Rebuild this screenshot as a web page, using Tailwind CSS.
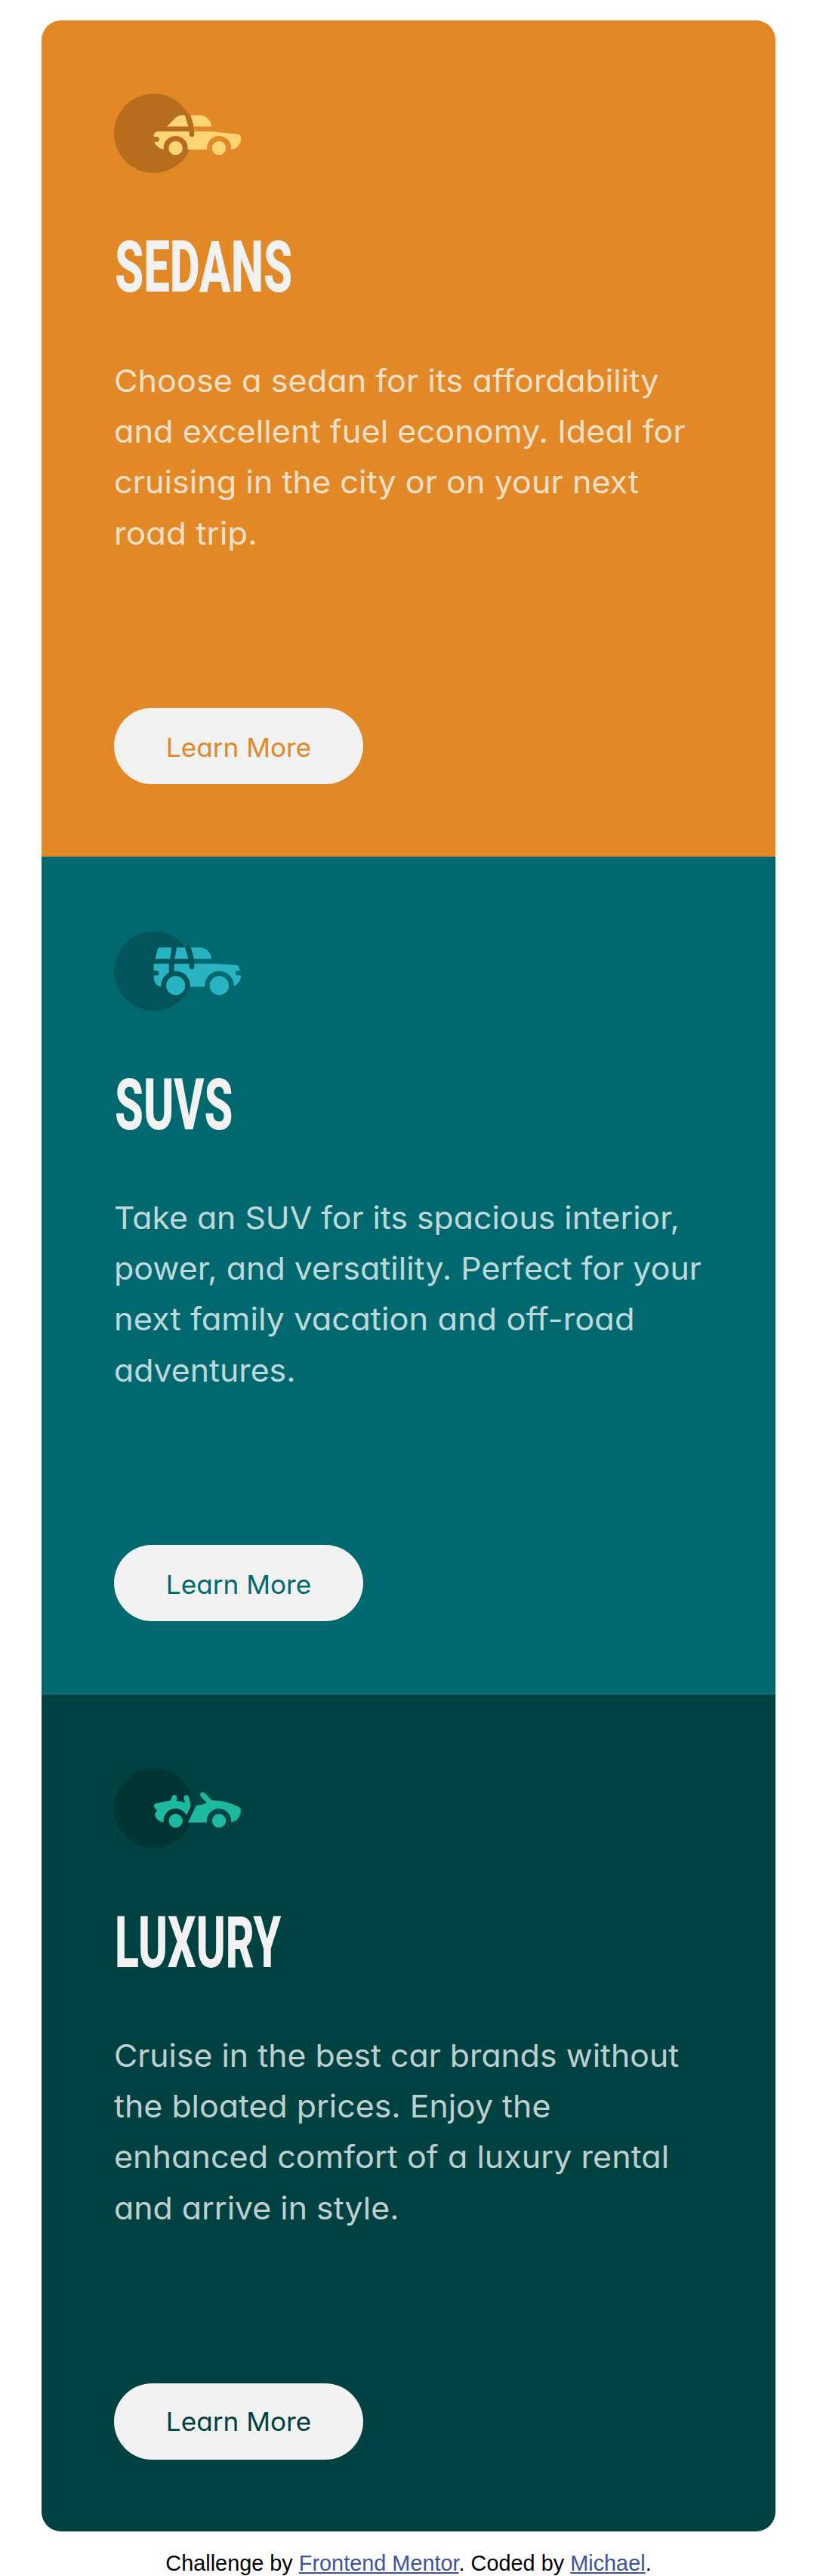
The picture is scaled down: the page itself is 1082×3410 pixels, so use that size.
<!DOCTYPE html>
<html lang="en"><head><meta charset="utf-8"><title>3-column preview card</title>
<script src="https://cdn.jsdelivr.net/npm/@tailwindcss/browser@4"></script></head>
<body class="bg-white font-['Inter',sans-serif] [font-feature-settings:'cv11']">
<main class="mx-auto mt-[27px] w-[972px] text-[#f2f2f2]">
<section class="h-[1107px] rounded-t-[26px] bg-[#e28826] px-24 pt-[97px]">
<svg class="block h-[105px] w-[168px]" viewBox="0 0 64 40" fill="#ffd473"><circle cx="20" cy="20" r="20" fill="#b66d1e"/><path d="M26.7 16.6 31.2 12Q32.5 10.9 34 10.9H35.8L37.5 16.6ZM38.6 10.9H43.5C46.3 10.9 48.5 13 49.3 16.6H40.2C39.9 14.5 39.4 12.8 38.6 10.9Z"/><path fill="none" stroke="#b66d1e" stroke-width="2.4" stroke-linecap="round" d="M37.2 11.1C38.7 14.8 39.25 17.5 39.25 20.5"/><path d="M22.1 19.05H38V20.6a1.25 1.25 0 0 0 2.5 0V19.05H49.2L62.3 20.5Q64 20.7 64 22.3V22.9C64 25.6 62 27.9 59.1 28.2V27.4a6.1 6.1 0 0 0-12.2 0V28.2H37.2V27.4A6.1 6.1 0 0 0 25 27.4V28.2C22.8 27.6 21 26.3 20.4 24.3H21.5a1.3 1.3 0 0 0 0-2.6H20.06V21.1A2.05 2.05 0 0 1 22.1 19.05Z"/><circle cx="31.1" cy="27.4" r="3.5"/><circle cx="52.95" cy="27.4" r="3.5"/></svg>
<h2 class="mt-[78px] ml-px font-['Roboto',sans-serif] text-[94px] leading-none font-extrabold"><span class="inline-block origin-left scale-x-[.655]">SEDANS</span></h2>
<p class="mt-[70px] text-[41px] leading-[67.2px] whitespace-nowrap text-white/75"><span class="block origin-left scale-x-[1.054]">Choose a sedan for its affordability</span><span class="block origin-left scale-x-[1.056]">and excellent fuel economy. Ideal for</span><span class="block origin-left scale-x-[1.053]">cruising in the city or on your next</span><span class="block origin-left scale-x-[1.07]">road trip.</span></p>
<a class="mt-[197px] flex h-[101px] w-[330px] items-center justify-center rounded-full bg-[#f2f2f2] pt-[5px] text-[34px] text-[#e28826]"><span class="scale-x-[1.035]">Learn More</span></a>
</section>
<section class="h-[1109px] border-b border-[#33787b] bg-[#006970] px-24 pt-[99px]">
<svg class="block h-[105px] w-[168px]" viewBox="0 0 64 40" fill="#28b4c3"><circle cx="20" cy="20" r="20" fill="#00545a"/><path d="M20.8 13.8 22 9Q22.3 8.1 23.2 8.1H29.1L28.2 13.8ZM31.6 8.1H35.9L37.5 13.8H30.6ZM38.7 8.1H43.2C46.3 8.1 48.7 10.3 49.3 13.8H40.25C39.9 11.7 39.5 10 38.7 8.1Z"/><path fill="none" stroke="#00545a" stroke-width="2.4" stroke-linecap="round" d="M37.2 8.3C38.7 12 39.25 14.7 39.25 17.7"/><path d="M20.06 16.25H27.7V20.8C25.1 22.2 23.8 24.6 23.7 27.9C21.5 27.5 20.06 25.6 20.06 23.2V22.2H21.4a1.2 1.2 0 0 0 0-2.4H20.06ZM30.35 16.25H38V17.8a1.25 1.25 0 0 0 2.5 0V16.25H50.4L61.5 16.85Q62.6 16.9 63 17.8L63.6 19.8H62.5a1.2 1.2 0 0 0 0 2.4H64C64 24.6 62.7 26.7 60.4 27.6V27.3A7.3 7.3 0 0 0 45.8 27.3V27.9H38.4V27.3A7.3 7.3 0 0 0 30.35 20Z"/><circle cx="31.1" cy="27.3" r="4.8"/><circle cx="53.1" cy="27.3" r="4.8"/></svg>
<h2 class="mt-[78px] ml-px font-['Roboto',sans-serif] text-[94px] leading-none font-extrabold"><span class="inline-block origin-left scale-x-[.65]">SUVS</span></h2>
<p class="mt-[69px] text-[41px] leading-[67.2px] whitespace-nowrap text-white/75"><span class="block origin-left scale-x-[1.043]">Take an SUV for its spacious interior,</span><span class="block origin-left scale-x-[1.048]">power, and versatility. Perfect for your</span><span class="block origin-left scale-x-[1.059]">next family vacation and off-road</span><span class="block origin-left scale-x-[1.043]">adventures.</span></p>
<a class="mt-[197px] flex h-[101px] w-[330px] items-center justify-center rounded-full bg-[#f2f2f2] pt-[5px] text-[34px] text-[#006970]"><span class="scale-x-[1.035]">Learn More</span></a>
</section>
<section class="h-[1108px] rounded-b-[26px] bg-[#004241] px-24 pt-[98px]">
<svg class="block h-[105px] w-[168px]" viewBox="0 0 64 40" fill="#1cb9a0"><circle cx="20" cy="20" r="20" fill="#003534"/><path d="M21.2 17.65 28.6 16.1 29.2 14.3C29.5 13.4 30.4 13.2 31 13.5C31.7 13.8 31.9 14.6 31.7 15.3L31.5 16.4Q33.8 16.5 35.9 17.3L35.2 15.1C35 14.1 35.6 13.4 36.4 13.4C37.1 13.3 37.6 13.8 37.8 14.6L38.5 17.2Q38.9 18.6 38.3 19.9L36.6 23.7A6.1 6.1 0 0 0 25 26.4V27.2C22.6 26.8 20.7 25 20.6 23.2C20.6 22.5 21 22.2 21.7 21.4C21.4 20.6 20.06 19.9 20.06 18.9Q20.1 17.9 21.2 17.65ZM37.3 27.2 41.5 18.7Q44.5 18.5 46.8 17.3L43.9 14.3C43 13.3 43.6 11.9 44.7 11.9Q45.3 11.9 45.9 12.5L49.4 16.1Q56.5 16 63.2 19.5Q64 20 64 20.8C64 24.2 62 26.9 59.05 27.2V26.4a6.1 6.1 0 0 0-12.2 0V27.2Z"/><circle cx="31.1" cy="26.4" r="3.5"/><circle cx="52.95" cy="26.4" r="3.5"/></svg>
<h2 class="mt-[79px] ml-px font-['Roboto',sans-serif] text-[94px] leading-none font-extrabold"><span class="inline-block origin-left scale-x-[.627]">LUXURY</span></h2>
<p class="mt-[69px] text-[41px] leading-[67.2px] whitespace-nowrap text-white/75"><span class="block origin-left scale-x-[1.043]">Cruise in the best car brands without</span><span class="block origin-left scale-x-[1.045]">the bloated prices. Enjoy the</span><span class="block origin-left scale-x-[1.051]">enhanced comfort of a luxury rental</span><span class="block origin-left scale-x-[1.045]">and arrive in style.</span></p>
<a class="mt-[198px] flex h-[101px] w-[330px] items-center justify-center rounded-full bg-[#f2f2f2] text-[34px] text-[#004241]"><span class="scale-x-[1.035]">Learn More</span></a>
</section>
</main>
<footer class="mt-[26px] h-[32px] overflow-hidden text-center font-['Liberation_Sans',Arial,sans-serif] text-[28.875px] leading-[33px] text-black">Challenge by <a class="text-[#3e52a3] underline">Frontend Mentor</a>. Coded by <a class="text-[#3e52a3] underline">Michael</a>.</footer>
</body></html>
